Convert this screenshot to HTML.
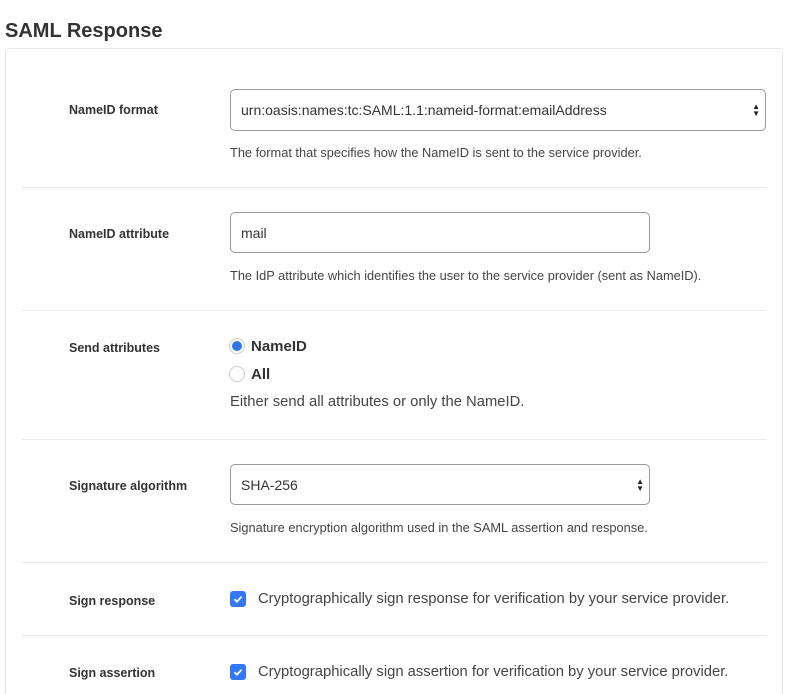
<!DOCTYPE html>
<html style="overflow:hidden"><head><meta charset="utf-8"><style>
html,body{margin:0;width:793px;height:694px;overflow:hidden}
body{background:#fff;font-family:"Liberation Sans",sans-serif;color:#333;position:relative}
.a{position:absolute}
h1{position:absolute;left:5px;top:20px;margin:0;font-size:20px;font-weight:bold;color:#333}
.card{left:5px;top:48px;width:776px;height:660px;border:1px solid #e6e8ec;border-radius:4px}
.sep{left:22px;width:744px;height:1px;background:#e8eaee}
.lbl{left:69px;font-size:12.5px;font-weight:bold;color:#333}
.box{border:1px solid #9a9a9a;border-radius:5px;background:#fff;font-size:14px;color:#333;box-sizing:border-box;padding-left:10px;display:flex;align-items:center}
.help{left:230px;font-size:12.8px;color:#444}
.arr{position:absolute;right:5px;top:50%;transform:translateY(-50%);font-size:8px;line-height:7px;color:#222;text-align:center}
.cb{width:16px;height:16px;border-radius:3px;background:#3478f6}
.big{font-size:14.8px;color:#444}
</style></head><body>
<h1>SAML Response</h1>
<div class="a card"></div>

<div class="a lbl" style="top:103px">NameID format</div>
<div class="a box" style="left:230px;top:89px;width:536px;height:42px">urn:oasis:names:tc:SAML:1.1:nameid-format:emailAddress<div class="arr">▲<br>▼</div></div>
<div class="a help" style="top:145px">The format that specifies how the NameID is sent to the service provider.</div>
<div class="a sep" style="top:187px"></div>

<div class="a lbl" style="top:227px">NameID attribute</div>
<div class="a box" style="left:230px;top:212px;width:420px;height:41px">mail</div>
<div class="a help" style="top:268px">The IdP attribute which identifies the user to the service provider (sent as NameID).</div>
<div class="a sep" style="top:310px"></div>

<div class="a lbl" style="top:341px">Send attributes</div>
<div class="a" style="left:229px;top:338px;width:16px;height:16px;border-radius:50%;border:1px solid #ccc;box-sizing:border-box;background:#fff"><div style="margin:2px;width:10px;height:10px;border-radius:50%;background:#2f74e8"></div></div>
<div class="a" style="left:251px;top:338px;font-size:15px;font-weight:bold;color:#333">NameID</div>
<div class="a" style="left:229px;top:366px;width:16px;height:16px;border-radius:50%;border:1px solid #ccc;box-sizing:border-box;background:#fff"></div>
<div class="a" style="left:251px;top:366px;font-size:15px;font-weight:bold;color:#333">All</div>
<div class="a big" style="left:230px;top:394px">Either send all attributes or only the NameID.</div>
<div class="a sep" style="top:439px"></div>

<div class="a lbl" style="top:479px">Signature algorithm</div>
<div class="a box" style="left:230px;top:464px;width:420px;height:41px">SHA-256<div class="arr">▲<br>▼</div></div>
<div class="a help" style="top:520px">Signature encryption algorithm used in the SAML assertion and response.</div>
<div class="a sep" style="top:562px"></div>

<div class="a lbl" style="top:594px">Sign response</div>
<div class="a cb" style="left:230px;top:591px"><svg width="16" height="16"><path d="M4.5 8.3l2.4 2.4 4.6-5" stroke="#fff" stroke-width="1.8" fill="none"/></svg></div>
<div class="a big" style="left:258px;top:591px">Cryptographically sign response for verification by your service provider.</div>
<div class="a sep" style="top:635px"></div>

<div class="a lbl" style="top:666px">Sign assertion</div>
<div class="a cb" style="left:230px;top:664px"><svg width="16" height="16"><path d="M4.5 8.3l2.4 2.4 4.6-5" stroke="#fff" stroke-width="1.8" fill="none"/></svg></div>
<div class="a big" style="left:258px;top:664px">Cryptographically sign assertion for verification by your service provider.</div>
</body></html>
